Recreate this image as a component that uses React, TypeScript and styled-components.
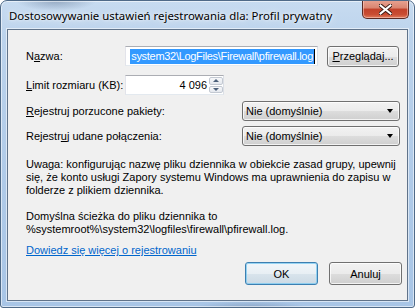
import React from 'react';
import styled, { createGlobalStyle } from 'styled-components';

const GlobalStyle = createGlobalStyle`
    html, body {
        margin: 0;
        padding: 0;
        background: #ffffff;
    }
    * {
        box-sizing: border-box;
    }
`;

const Window = styled.div`
    width: 415px;
    height: 308px;
    display: flex;
    flex-direction: column;
    border: 1px solid #4f6a88;
    border-radius: 7px 7px 3px 3px;
    background:
        radial-gradient(ellipse 40px 10px at 55px 0px, rgba(90, 110, 140, 0.45), transparent),
        radial-gradient(ellipse 60px 8px at 250px 308px, rgba(70, 90, 120, 0.35), transparent),
        linear-gradient(to bottom, #c7dbf0 0%, #bcd3ec 12%, #afcae8 60%, #a8c5e6 100%);
    box-shadow: inset 0 0 0 1px rgba(255, 255, 255, 0.55);
    overflow: hidden;
`;

const TitleBar = styled.div`
    height: 28px;
    display: flex;
    align-items: flex-start;
    padding-left: 8px;
`;

const Title = styled.div`
    flex: 1;
    padding-top: 7px;
    font-family: 'Noto Sans', sans-serif;
    font-size: 11.4px;
    line-height: 15px;
    color: #000;
    white-space: nowrap;
    text-shadow: 0 0 8px rgba(255, 255, 255, 0.9), 0 0 3px rgba(255, 255, 255, 0.9);
`;

const CloseButton = styled.div`
    width: 47px;
    height: 19px;
    margin-top: -1px;
    margin-right: 5px;
    display: flex;
    align-items: center;
    justify-content: center;
    border: 1px solid #5a2a24;
    border-top: none;
    border-radius: 0 0 5px 5px;
    background: linear-gradient(to bottom, #e8a493 0%, #d98470 45%, #c2412a 50%, #c94d33 80%, #e07a5c 100%);
    box-shadow: inset 0 0 0 1px rgba(255, 220, 210, 0.5);
`;

const Client = styled.div`
    flex: 1;
    margin: 0 6px 6px 6px;
    display: flex;
    flex-direction: column;
    padding: 16px 5px 15px 18px;
    background: #f0f0f0;
    border: 1px solid #60738a;
    box-shadow: 0 0 0 1px rgba(255, 255, 255, 0.55);
    font-family: 'Liberation Sans', Arial, sans-serif;
    font-size: 11px;
    color: #000;
`;

const Row = styled.div<{ $height: number; $gap: number }>`
    display: flex;
    align-items: center;
    height: ${(p) => p.$height}px;
    margin-bottom: ${(p) => p.$gap}px;
`;

const Label = styled.div<{ $width: number }>`
    width: ${(p) => p.$width}px;
    flex-shrink: 0;
    white-space: nowrap;
`;

const Key = styled.span`
    text-decoration: underline;
`;

const TextBox = styled.div<{ $width: number }>`
    width: ${(p) => p.$width}px;
    height: 20px;
    display: flex;
    align-items: center;
    background: #fff;
    border: 1px solid;
    border-color: #abadb3 #dbdfe6 #e3e9ef #e2e3ea;
    overflow: hidden;
    white-space: nowrap;
`;

const NameBox = styled(TextBox)`
    justify-content: flex-end;
    padding: 0 2px 0 1px;
`;

const Selected = styled.span`
    background: #3399ff;
    color: #fff;
    line-height: 15px;
    letter-spacing: -0.3px;
    padding: 0 1px 0 1px;
`;

const Caret = styled.span`
    width: 1px;
    height: 15px;
    flex-shrink: 0;
    background: #000;
`;

const NumberBox = styled(TextBox)`
    justify-content: flex-end;
    padding: 1px 0 1px 2px;
`;

const NumberValue = styled.span`
    flex: 1;
    text-align: right;
    padding-right: 2px;
`;

const Spinner = styled.div`
    width: 14px;
    height: 100%;
    display: flex;
    flex-direction: column;
    gap: 1px;
`;

const SpinHalf = styled.div`
    flex: 1;
    display: flex;
    align-items: center;
    justify-content: center;
    border: 1px solid #c3c9d2;
    border-radius: 2px;
    background: linear-gradient(to bottom, #f7f8fa, #e4e8ee);
`;

const Arrow = styled.div<{ $up?: boolean }>`
    width: 0;
    height: 0;
    border-left: 3px solid transparent;
    border-right: 3px solid transparent;
    ${(p) => (p.$up ? 'border-bottom: 3px solid #4c607a;' : 'border-top: 3px solid #4c607a;')}
`;

const Spacer = styled.div<{ $width: number }>`
    width: ${(p) => p.$width}px;
    flex-shrink: 0;
`;

const PushButton = styled.div<{ $width: number; $height: number; $default?: boolean }>`
    width: ${(p) => p.$width}px;
    height: ${(p) => p.$height}px;
    display: flex;
    align-items: center;
    justify-content: center;
    border: 1px solid ${(p) => (p.$default ? '#3c7fb1' : '#707070')};
    border-radius: 3px;
    background: ${(p) =>
        p.$default
            ? 'linear-gradient(to bottom, #f1f6fa 0%, #e8eff4 50%, #d9e4ec 51%, #ccdae5 100%)'
            : 'linear-gradient(to bottom, #f2f2f2 0%, #ebebeb 50%, #dddddd 51%, #cfcfcf 100%)'};
    box-shadow: inset 0 0 0 1px ${(p) => (p.$default ? 'rgba(120, 200, 240, 0.75)' : 'rgba(255, 255, 255, 0.75)')};
    white-space: nowrap;
`;

const Combo = styled.div`
    width: 158px;
    height: 20px;
    display: flex;
    align-items: center;
    justify-content: space-between;
    padding: 0 6px 0 3px;
    border: 1px solid #707070;
    border-radius: 3px;
    background: linear-gradient(to bottom, #f2f2f2 0%, #ebebeb 50%, #dddddd 51%, #cfcfcf 100%);
    box-shadow: inset 0 0 0 1px rgba(255, 255, 255, 0.75);
    white-space: nowrap;
`;

const ComboArrow = styled.div`
    width: 0;
    height: 0;
    border-left: 3.5px solid transparent;
    border-right: 3.5px solid transparent;
    border-top: 4px solid #000;
`;

const Paragraph = styled.p<{ $gap: number }>`
    margin: 0 0 ${(p) => p.$gap}px 0;
    line-height: 13px;
    width: 370px;
`;

const HelpLink = styled.a`
    color: #0066cc;
    text-decoration: underline;
    line-height: 13px;
    align-self: flex-start;
    cursor: pointer;
`;

const Footer = styled.div`
    display: flex;
    justify-content: flex-end;
    gap: 11px;
    margin-top: 5px;
`;

const CloseIcon = () => (
    <svg width="13" height="11" viewBox="0 0 13 11">
        <path
            d="M1.5 1.5 L11.5 9.5 M11.5 1.5 L1.5 9.5"
            stroke="#3a1a14"
            strokeWidth="4"
            strokeLinecap="square"
            fill="none"
        />
        <path
            d="M1.5 1.5 L11.5 9.5 M11.5 1.5 L1.5 9.5"
            stroke="#ffffff"
            strokeWidth="2"
            strokeLinecap="square"
            fill="none"
        />
    </svg>
);

export default function App() {
    return (
        <>
            <GlobalStyle />
            <Window>
                <TitleBar>
                    <Title>Dostosowywanie ustawień rejestrowania dla: Profil prywatny</Title>
                    <CloseButton>
                        <CloseIcon />
                    </CloseButton>
                </TitleBar>
                <Client>
                    <Row $height={20} $gap={9}>
                        <Label $width={99}>
                            N<Key>a</Key>zwa:
                        </Label>
                        <NameBox $width={193}>
                            <Selected>system32\LogFiles\Firewall\pfirewall.log</Selected>
                            <Caret />
                        </NameBox>
                        <Spacer $width={9} />
                        <PushButton $width={72} $height={21}>
                            <span>
                                <Key>P</Key>rzeglądaj...
                            </span>
                        </PushButton>
                    </Row>
                    <Row $height={20} $gap={6}>
                        <Label $width={99}>
                            <Key>L</Key>imit rozmiaru (KB):
                        </Label>
                        <NumberBox $width={99}>
                            <NumberValue>4 096</NumberValue>
                            <Spinner>
                                <SpinHalf>
                                    <Arrow $up />
                                </SpinHalf>
                                <SpinHalf>
                                    <Arrow />
                                </SpinHalf>
                            </Spinner>
                        </NumberBox>
                    </Row>
                    <Row $height={20} $gap={5}>
                        <Label $width={216}>
                            <Key>R</Key>ejestruj porzucone pakiety:
                        </Label>
                        <Combo>
                            <span>Nie (domyślnie)</span>
                            <ComboArrow />
                        </Combo>
                    </Row>
                    <Row $height={20} $gap={12}>
                        <Label $width={216}>
                            Rejestr<Key>u</Key>j udane połączenia:
                        </Label>
                        <Combo>
                            <span>Nie (domyślnie)</span>
                            <ComboArrow />
                        </Combo>
                    </Row>
                    <Paragraph $gap={13}>
                        Uwaga: konfigurując nazwę pliku dziennika w obiekcie zasad grupy, upewnij się, że konto
                        usługi Zapory systemu Windows ma uprawnienia do zapisu w folderze z plikiem dziennika.
                    </Paragraph>
                    <Paragraph $gap={8}>
                        Domyślna ścieżka do pliku dziennika to
                        <br />
                        %systemroot%\system32\logfiles\firewall\pfirewall.log.
                    </Paragraph>
                    <HelpLink>Dowiedz się więcej o rejestrowaniu</HelpLink>
                    <Footer>
                        <PushButton $width={73} $height={23} $default>
                            OK
                        </PushButton>
                        <PushButton $width={73} $height={23}>
                            Anuluj
                        </PushButton>
                    </Footer>
                </Client>
            </Window>
        </>
    );
}
